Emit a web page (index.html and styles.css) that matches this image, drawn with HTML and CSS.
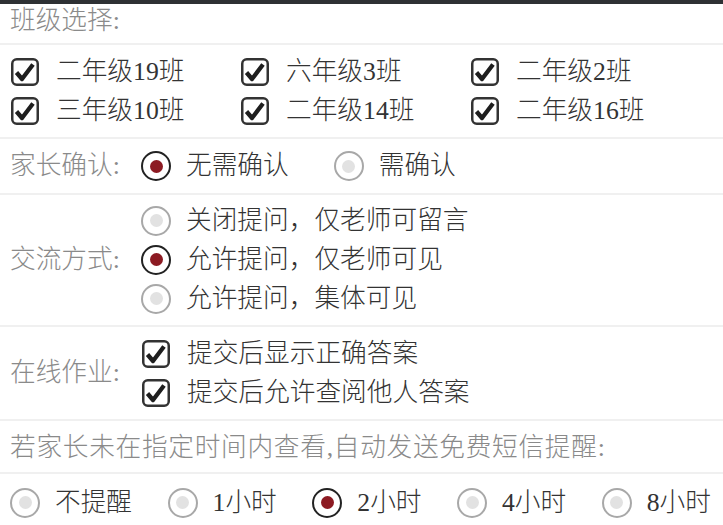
FILE: index.html
```html
<!DOCTYPE html>
<html lang="zh">
<head>
<meta charset="utf-8">
<link rel="stylesheet" href="styles.css">
</head>
<body>
<div class="topbar"></div>

<div class="sec sec-title"><span class="label">班级选择:</span></div>

<div class="sec sec-classes">
  <div class="class-grid">
    <label class="opt chk-opt"><svg class="chk" viewBox="0 0 28 28"><rect x="1.25" y="1.25" width="25.5" height="25.5" rx="4.5"/><path d="M5.5 14.5 L11 21 L22 6.5"/></svg><span class="txt">二年级19班</span></label>
    <label class="opt chk-opt"><svg class="chk" viewBox="0 0 28 28"><rect x="1.25" y="1.25" width="25.5" height="25.5" rx="4.5"/><path d="M5.5 14.5 L11 21 L22 6.5"/></svg><span class="txt">六年级3班</span></label>
    <label class="opt chk-opt"><svg class="chk" viewBox="0 0 28 28"><rect x="1.25" y="1.25" width="25.5" height="25.5" rx="4.5"/><path d="M5.5 14.5 L11 21 L22 6.5"/></svg><span class="txt">二年级2班</span></label>
    <label class="opt chk-opt"><svg class="chk" viewBox="0 0 28 28"><rect x="1.25" y="1.25" width="25.5" height="25.5" rx="4.5"/><path d="M5.5 14.5 L11 21 L22 6.5"/></svg><span class="txt">三年级10班</span></label>
    <label class="opt chk-opt"><svg class="chk" viewBox="0 0 28 28"><rect x="1.25" y="1.25" width="25.5" height="25.5" rx="4.5"/><path d="M5.5 14.5 L11 21 L22 6.5"/></svg><span class="txt">二年级14班</span></label>
    <label class="opt chk-opt"><svg class="chk" viewBox="0 0 28 28"><rect x="1.25" y="1.25" width="25.5" height="25.5" rx="4.5"/><path d="M5.5 14.5 L11 21 L22 6.5"/></svg><span class="txt">二年级16班</span></label>
  </div>
</div>

<div class="sec sec-row sec-parent">
  <span class="label lab-col">家长确认:</span>
  <div class="inline-opts gap-44">
    <span class="opt"><span class="radio on"></span><span class="txt">无需确认</span></span>
    <span class="opt"><span class="radio"></span><span class="txt">需确认</span></span>
  </div>
</div>

<div class="sec sec-row sec-exchange">
  <span class="label lab-col">交流方式:</span>
  <div class="stack-opts">
    <span class="opt"><span class="radio"></span><span class="txt">关闭提问，仅老师可留言</span></span>
    <span class="opt"><span class="radio on"></span><span class="txt">允许提问，仅老师可见</span></span>
    <span class="opt"><span class="radio"></span><span class="txt">允许提问，集体可见</span></span>
  </div>
</div>

<div class="sec sec-row sec-homework">
  <span class="label lab-col">在线作业:</span>
  <div class="stack-opts hw-opts">
    <label class="opt chk-opt"><svg class="chk" viewBox="0 0 28 28"><rect x="1.25" y="1.25" width="25.5" height="25.5" rx="4.5"/><path d="M5.5 14.5 L11 21 L22 6.5"/></svg><span class="txt">提交后显示正确答案</span></label>
    <label class="opt chk-opt"><svg class="chk" viewBox="0 0 28 28"><rect x="1.25" y="1.25" width="25.5" height="25.5" rx="4.5"/><path d="M5.5 14.5 L11 21 L22 6.5"/></svg><span class="txt">提交后允许查阅他人答案</span></label>
  </div>
</div>

<div class="sec sec-notice"><span class="label notice-text">若家长未在指定时间内查看,自动发送免费短信提醒:</span></div>

<div class="sec sec-remind">
  <span class="opt"><span class="radio"></span><span class="txt">不提醒</span></span>
  <span class="opt"><span class="radio"></span><span class="txt">1小时</span></span>
  <span class="opt"><span class="radio on"></span><span class="txt">2小时</span></span>
  <span class="opt"><span class="radio"></span><span class="txt">4小时</span></span>
  <span class="opt"><span class="radio"></span><span class="txt">8小时</span></span>
</div>
</body>
</html>
```

FILE: styles.css
```css
html, body {
  margin: 0;
  padding: 0;
  background: #ffffff;
}
body {
  width: 723px;
  height: 525px;
  overflow: hidden;
  font-family: "Liberation Serif", "Noto Sans CJK SC", sans-serif;
  font-size: 25.7px;
  font-weight: 300;
  color: #333333;
}
.topbar {
  height: 4px;
  background: #2e3134;
}
.sec {
  box-sizing: border-box;
  border-bottom: 2px solid #f0f0f0;
}
.sec:last-child {
  border-bottom: none;
}
.label {
  color: #8a8a8a;
  line-height: 30px;
  white-space: nowrap;
}
.sec-title {
  height: 41px;
  padding: 2px 0 0 10px;
}
.sec-classes {
  height: 94px;
  padding: 7px 0 0 11px;
}
.class-grid {
  display: grid;
  grid-template-columns: 230px 230px 230px;
  grid-auto-rows: 39px;
}
.opt {
  display: flex;
  align-items: center;
  height: 39px;
  white-space: nowrap;
}
.txt {
  line-height: 30px;
}
.chk {
  width: 28px;
  height: 28px;
  flex: none;
  margin-right: 17px;
}
.chk rect {
  fill: #ffffff;
  stroke: #333333;
  stroke-width: 2.5;
}
.chk path {
  fill: none;
  stroke: #1e1e1e;
  stroke-width: 4.3;
  stroke-linejoin: round;
  stroke-linecap: butt;
}
.radio {
  position: relative;
  box-sizing: border-box;
  width: 30px;
  height: 30px;
  flex: none;
  border: 2px solid #a8a8a8;
  border-radius: 50%;
  margin-right: 15px;
  display: flex;
  align-items: center;
  justify-content: center;
}
.radio::after {
  content: "";
  width: 13px;
  height: 13px;
  border-radius: 50%;
  background: #e2e2e2;
}
.radio.on {
  border-color: #222222;
}
.radio.on::after {
  background: #8c1a22;
}
.sec-row {
  display: flex;
  align-items: center;
}
.lab-col {
  box-sizing: border-box;
  width: 141px;
  padding-left: 10px;
  flex: none;
}
.sec-parent {
  height: 56px;
}
.inline-opts {
  display: flex;
  align-items: center;
}
.gap-44 {
  gap: 45px;
}
.stack-opts {
  display: flex;
  flex-direction: column;
}
.sec-exchange {
  height: 132px;
  padding: 6px 0 7px 0;
}
.sec-homework {
  height: 94px;
  padding: 7px 0 7px 0;
}
.hw-opts {
  padding-left: 1px;
}
.sec-notice {
  height: 53px;
  padding: 2px 0 0 10px;
  display: flex;
  align-items: center;
}
.notice-text {
  letter-spacing: 0.7px;
}
.sec-remind {
  height: 51px;
  padding: 6px 0 0 10px;
  display: flex;
  align-items: center;
  gap: 35.5px;
}
```
